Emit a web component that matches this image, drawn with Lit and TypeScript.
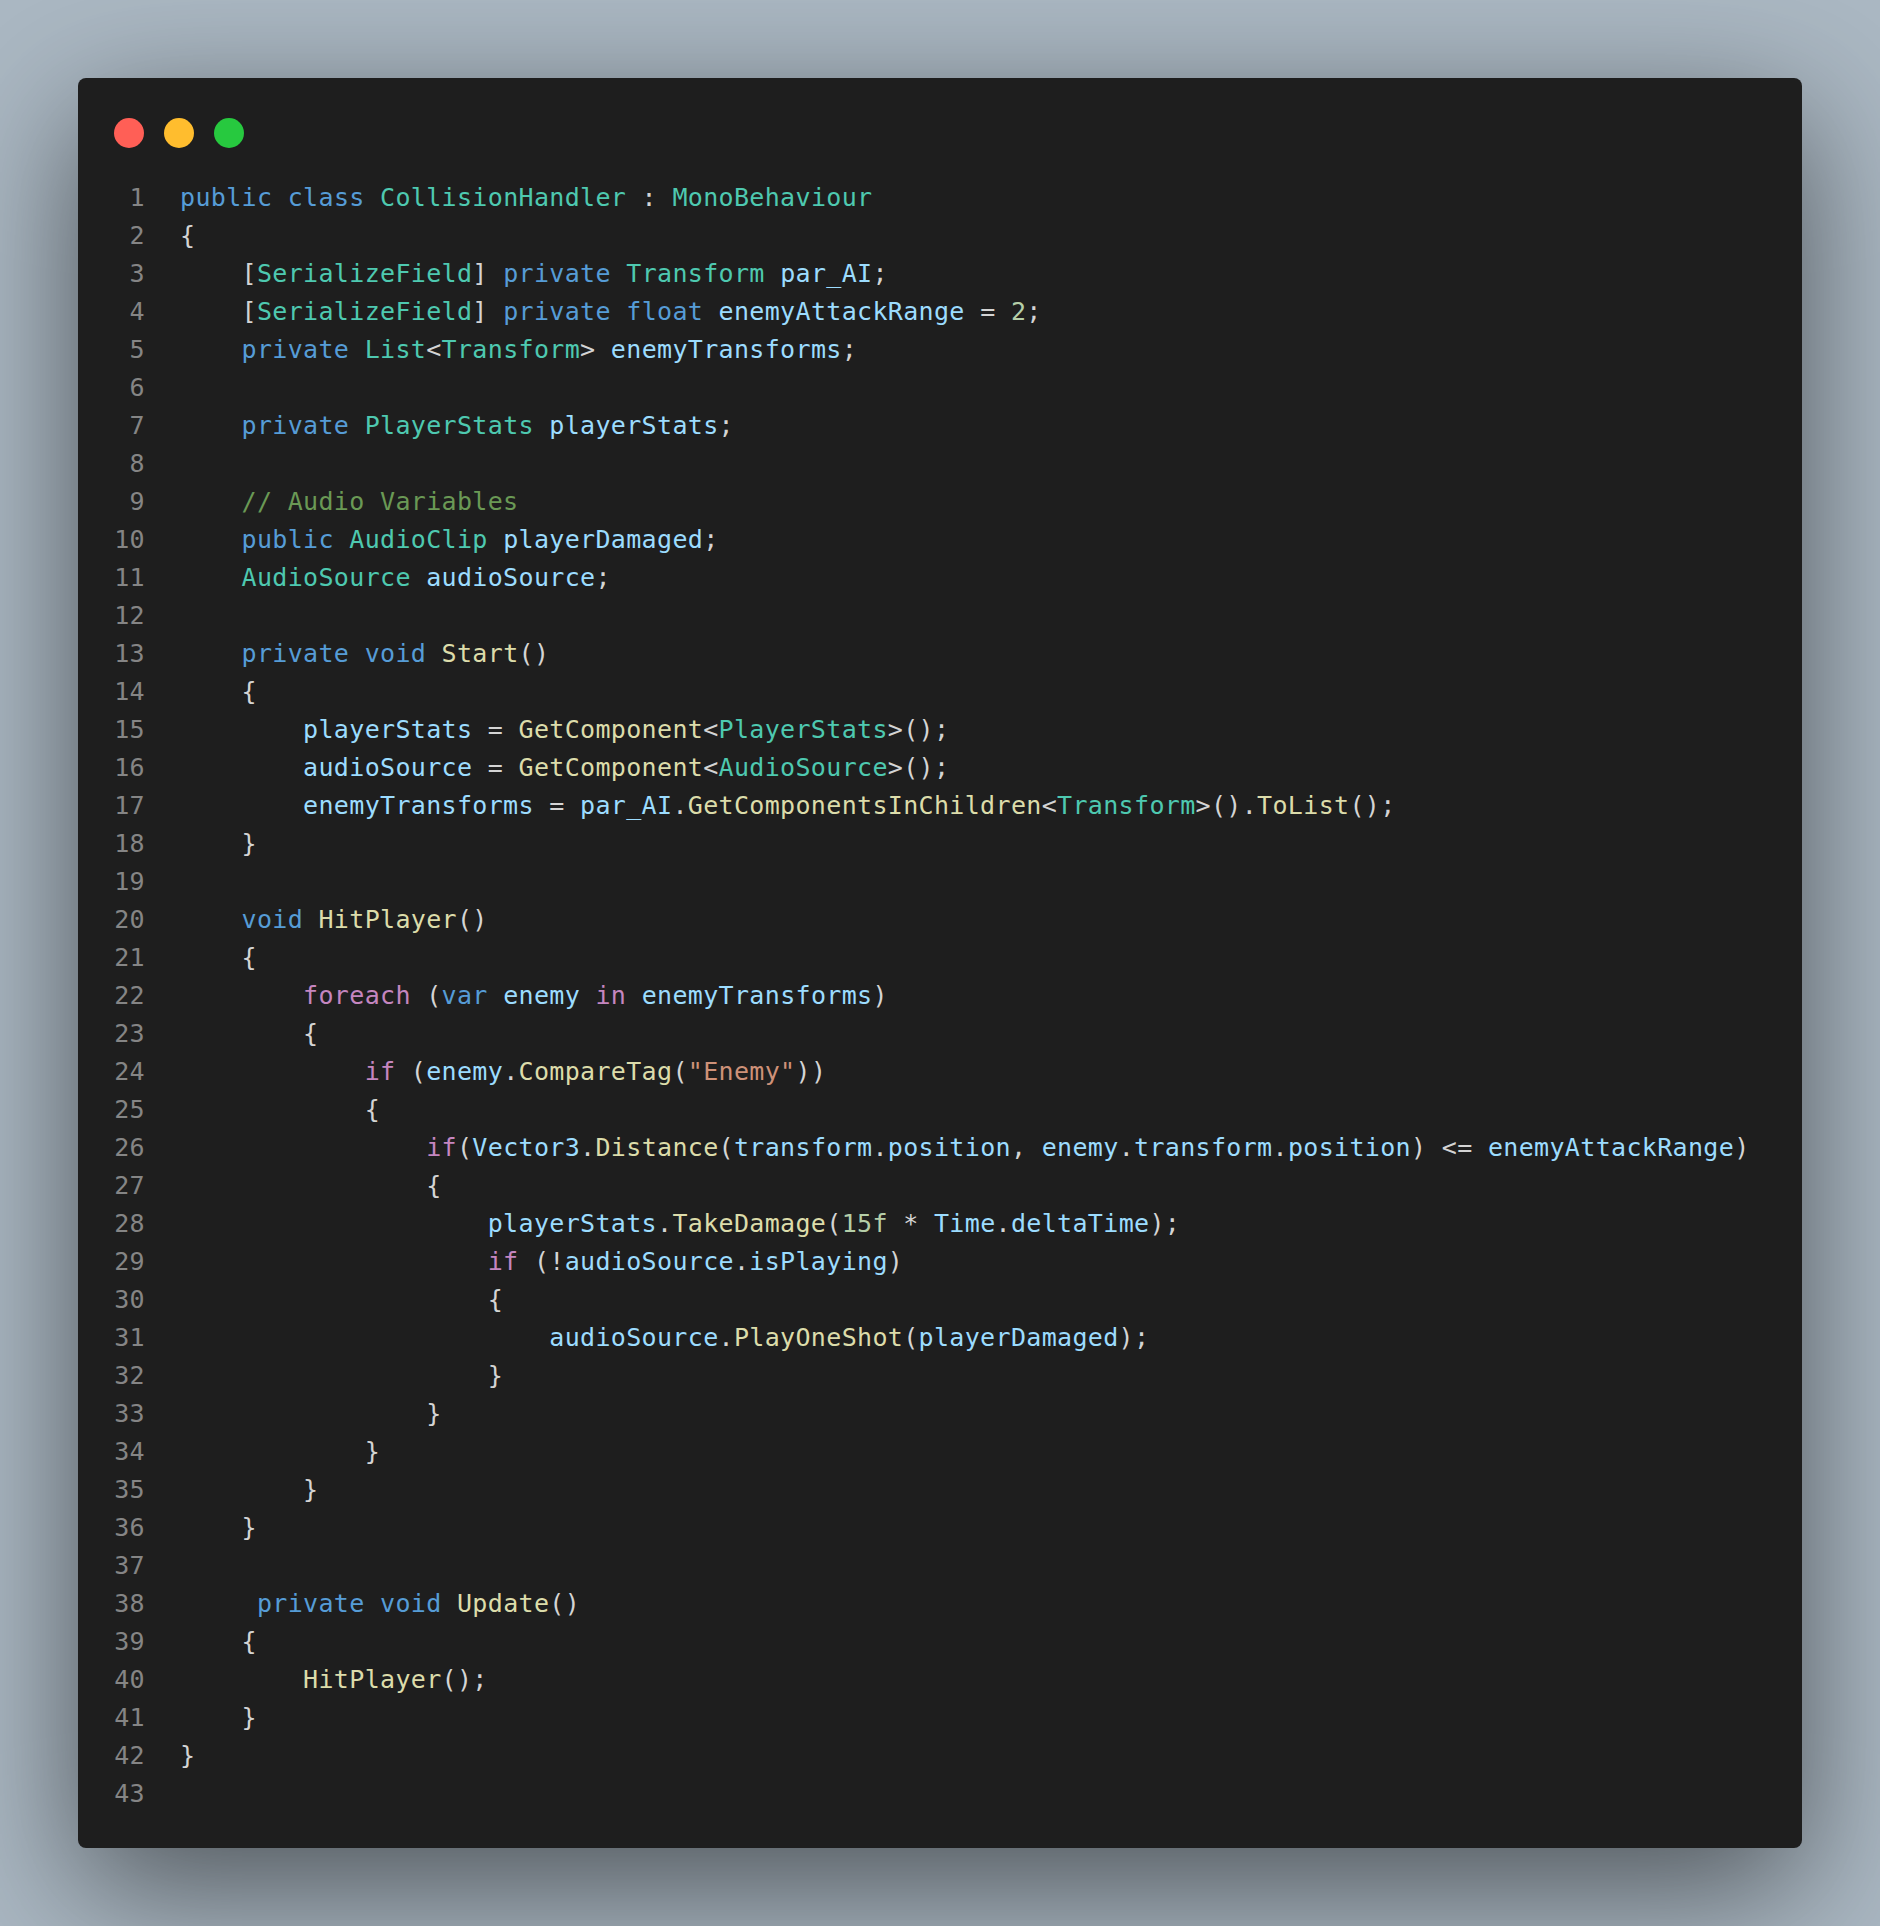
import { LitElement, html, css } from "lit";
import { customElement } from "lit/decorators.js";

// Each line is source text with «c|text» marking a coloured token.
// c: k keyword, t type, v variable, f function, s string, n number, m comment, c control flow.
const SOURCE = [
  "«k|public» «k|class» «t|CollisionHandler» : «t|MonoBehaviour»",
  "{",
  "    [«t|SerializeField»] «k|private» «t|Transform» «v|par_AI»;",
  "    [«t|SerializeField»] «k|private» «k|float» «v|enemyAttackRange» = «n|2»;",
  "    «k|private» «t|List»<«t|Transform»> «v|enemyTransforms»;",
  "",
  "    «k|private» «t|PlayerStats» «v|playerStats»;",
  "",
  "    «m|// Audio Variables»",
  "    «k|public» «t|AudioClip» «v|playerDamaged»;",
  "    «t|AudioSource» «v|audioSource»;",
  "",
  "    «k|private» «k|void» «f|Start»()",
  "    {",
  "        «v|playerStats» = «f|GetComponent»<«t|PlayerStats»>();",
  "        «v|audioSource» = «f|GetComponent»<«t|AudioSource»>();",
  "        «v|enemyTransforms» = «v|par_AI».«f|GetComponentsInChildren»<«t|Transform»>().«f|ToList»();",
  "    }",
  "",
  "    «k|void» «f|HitPlayer»()",
  "    {",
  "        «c|foreach» («k|var» «v|enemy» «c|in» «v|enemyTransforms»)",
  "        {",
  "            «c|if» («v|enemy».«f|CompareTag»(«s|\"Enemy\"»))",
  "            {",
  "                «c|if»(«v|Vector3».«f|Distance»(«v|transform».«v|position», «v|enemy».«v|transform».«v|position») <= «v|enemyAttackRange»)",
  "                {",
  "                    «v|playerStats».«f|TakeDamage»(«n|15f» * «v|Time».«v|deltaTime»);",
  "                    «c|if» (!«v|audioSource».«v|isPlaying»)",
  "                    {",
  "                        «v|audioSource».«f|PlayOneShot»(«v|playerDamaged»);",
  "                    }",
  "                }",
  "            }",
  "        }",
  "    }",
  "",
  "     «k|private» «k|void» «f|Update»()",
  "    {",
  "        «f|HitPlayer»();",
  "    }",
  "}",
  "",
];

function tokens(line: string) {
  return line.split(/(«[^»]*»)/).map((part) => {
    if (part.startsWith("«")) {
      const kind = part[1];
      return html`<span class=${kind}>${part.slice(3, -1)}</span>`;
    }
    return part;
  });
}

@customElement("app-root")
export class AppRoot extends LitElement {
  static styles = css`
    :host {
      display: block;
      box-sizing: border-box;
      padding: 78px;
      background: #abb8c3;
      min-height: 1926px;
    }
    .window {
      background: #1e1e1e;
      border-radius: 8px;
      box-shadow: 0 40px 136px rgba(0, 0, 0, 0.55);
      padding: 40px 36px 35px;
    }
    .dots {
      display: flex;
      gap: 20px;
      margin-bottom: 31px;
    }
    .dot {
      width: 30px;
      height: 30px;
      border-radius: 50%;
    }
    .red { background: #ff5f56; }
    .amber { background: #ffbd2e; }
    .green { background: #27c93f; }
    .code {
      font-family: "DejaVu Sans Mono", "Liberation Mono", monospace;
      font-size: 25px;
      letter-spacing: 0.335px;
      line-height: 38px;
      color: #d4d4d4;
    }
    .row {
      display: grid;
      grid-template-columns: 31px 1fr;
      column-gap: 35px;
      height: 38px;
      white-space: pre;
    }
    .num {
      color: #858585;
      text-align: right;
    }
    .k { color: #569cd6; }
    .t { color: #4ec9b0; }
    .v { color: #9cdcfe; }
    .f { color: #dcdcaa; }
    .s { color: #ce9178; }
    .n { color: #b5cea8; }
    .m { color: #6a9955; }
    .c { color: #c586c0; }
  `;

  render() {
    return html`
      <div class="window">
        <div class="dots">
          <div class="dot red"></div>
          <div class="dot amber"></div>
          <div class="dot green"></div>
        </div>
        <div class="code">
          ${SOURCE.map(
            (line, i) => html`<div class="row"><span class="num">${i + 1}</span><span>${tokens(line)}</span></div>`
          )}
        </div>
      </div>
    `;
  }
}
